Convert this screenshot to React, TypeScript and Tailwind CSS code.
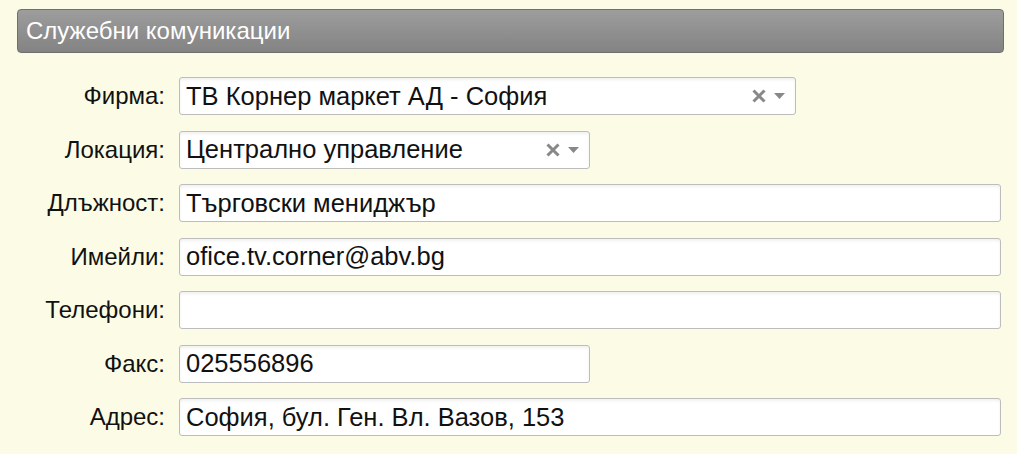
import React from 'react';

type Field = {
  label: string;
  value: string;
  width: string;
  select?: boolean;
};

const fields: Field[] = [
  { label: 'Фирма:', value: 'ТВ Корнер маркет АД - София', width: 'w-[617px]', select: true },
  { label: 'Локация:', value: 'Централно управление', width: 'w-[411px]', select: true },
  { label: 'Длъжност:', value: 'Търговски мениджър', width: 'w-[822px]' },
  { label: 'Имейли:', value: 'ofice.tv.corner@abv.bg', width: 'w-[822px]' },
  { label: 'Телефони:', value: '', width: 'w-[822px]' },
  { label: 'Факс:', value: '025556896', width: 'w-[411px]' },
  { label: 'Адрес:', value: 'София, бул. Ген. Вл. Вазов, 153', width: 'w-[822px]' },
];

const SelectControls = () => (
  <div className="flex shrink-0 items-center gap-[8px] pr-[10px]">
    <svg className="block h-[14px] w-[14px] shrink-0" viewBox="0 0 14 14">
      <path d="M1.5 1.5 L12.5 12.5 M12.5 1.5 L1.5 12.5" stroke="#888" strokeWidth="3" />
    </svg>
    <svg className="block h-[6px] w-[11px] shrink-0" viewBox="0 0 11 6">
      <path d="M0 0 L11 0 L5.5 6 Z" fill="#888" />
    </svg>
  </div>
);

export default function App() {
  return (
    <div className="min-h-[454px] w-full bg-[#fcfce6] pt-[9px] pl-[17px] pr-[13px] font-['Liberation_Sans',Arial,sans-serif]">
      <div className="flex h-[44px] items-center rounded-[4px] border border-[#6f6f6f] bg-gradient-to-b from-[#9d9d9d] to-[#838383] pl-[8px] text-[24px] text-white">
        Служебни комуникации
      </div>
      <div className="mt-[24px] flex flex-col gap-[15.5px]">
        {fields.map((f) => (
          <div key={f.label} className="flex items-center">
            <div className="w-[162px] shrink-0 pr-[14px] text-right text-[24px] text-[#111]">{f.label}</div>
            <div
              className={`${f.width} flex h-[38px] items-center justify-between rounded-[3px] border border-[#bdbdbd] bg-white pl-[6px] text-[25.5px] text-[#111] shadow-[inset_0_2px_3px_rgba(0,0,0,0.06)]`}
            >
              <span>{f.value}</span>
              {f.select && <SelectControls />}
            </div>
          </div>
        ))}
      </div>
    </div>
  );
}
